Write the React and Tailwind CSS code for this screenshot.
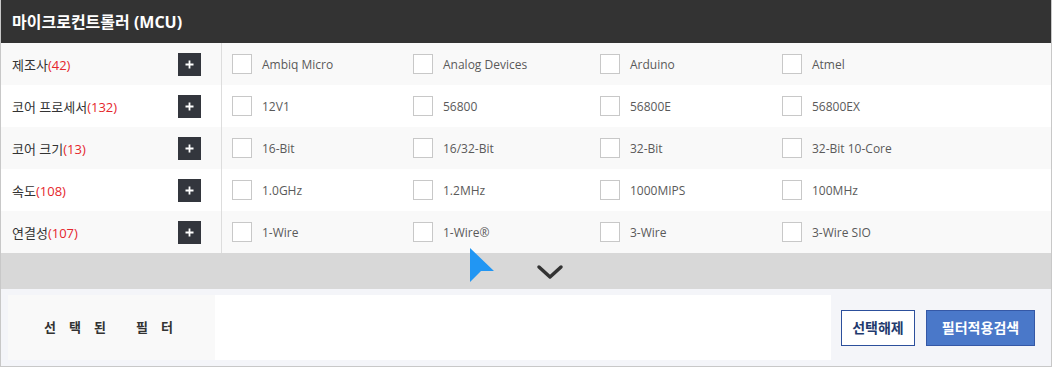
const rows = [
  { name: "제조사", count: 42, bg: "bg-[#f9f9f9]", items: ["Ambiq Micro", "Analog Devices", "Arduino", "Atmel"] },
  { name: "코어 프로세서", count: 132, bg: "bg-white", items: ["12V1", "56800", "56800E", "56800EX"] },
  { name: "코어 크기", count: 13, bg: "bg-[#f9f9f9]", items: ["16-Bit", "16/32-Bit", "32-Bit", "32-Bit 10-Core"] },
  { name: "속도", count: 108, bg: "bg-white", items: ["1.0GHz", "1.2MHz", "1000MIPS", "100MHz"] },
  { name: "연결성", count: 107, bg: "bg-[#f9f9f9]", items: ["1-Wire", "1-Wire®", "3-Wire", "3-Wire SIO"] },
]

const colWidths = ["w-[181px]", "w-[187px]", "w-[182px]", "flex-1"]

function FilterRow({ row }) {
  return (
    <div className={`flex h-[42px] ${row.bg}`}>
      <div className="flex w-[221px] items-center justify-between border-r border-[#dddddd] pl-[11px] pr-[20px]">
        <span className="pt-[3px] text-[13px] text-[#333]">
          {row.name}
          <span className="text-[#e5262c]">({row.count})</span>
        </span>
        <button className="flex h-[23px] w-[23px] items-center justify-center bg-[#33363d]">
          <svg width="9" height="9" viewBox="0 0 9 9">
            <path d="M4.5 0.5 V8.5 M0.5 4.5 H8.5" stroke="#fff" strokeWidth="1.8" />
          </svg>
        </button>
      </div>
      <div className="flex flex-1 items-center pl-[10px]">
        {row.items.map((item, i) => (
          <label key={item} className={`flex items-center ${colWidths[i]}`}>
            <span className="h-[20px] w-[20px] shrink-0 border border-[#c8c8c8] bg-white"></span>
            <span className="ml-[10px] pt-[2px] text-[12px] text-[#5a5a5a]">{item}</span>
          </label>
        ))}
      </div>
    </div>
  )
}

export default function App() {
  return (
    <div className="relative w-[1052px] h-[367px] border-x border-b border-[#c8c8c8] bg-white font-['Open_Sans','Noto_Sans_CJK_KR',sans-serif]">
      <div className="flex h-[43px] items-center bg-[#333333] pl-[11px] text-[16px] font-bold text-white">
        마이크로컨트롤러 (MCU)
      </div>
      {rows.map((row) => (
        <FilterRow key={row.name} row={row} />
      ))}
      <div className="flex h-[36px] items-center justify-center bg-[#d8d8d8] pl-[48px]">
        <svg width="28" height="16" viewBox="0 0 28 16" className="mt-[1px]">
          <path d="M3 3 L14 13 L25 3" fill="none" stroke="#333" strokeWidth="3.5" strokeLinecap="round" strokeLinejoin="round" />
        </svg>
      </div>
      <div className="flex h-[77px] items-center bg-[#f4f5f9] pl-[7px] pr-[16px]">
        <div className="flex h-[65px] w-[207px] items-center gap-[13px] bg-[#f9f9f9] pl-[36px] text-[13px] font-semibold text-[#333]">
          <span>선</span>
          <span>택</span>
          <span>된</span>
          <span className="ml-[17px]">필</span>
          <span>터</span>
        </div>
        <div className="h-[65px] w-[616px] bg-white"></div>
        <button className="ml-[10px] h-[36px] w-[74px] border border-[#2c4f9c] bg-white text-[14px] font-bold text-[#1f3a6e]">
          선택해제
        </button>
        <button className="ml-[11px] h-[36px] w-[109px] border border-[#3558a6] bg-[#4a78c9] text-[14px] font-bold text-white">
          필터적용검색
        </button>
      </div>
      <svg className="absolute left-[468px] top-[247px]" width="26" height="36" viewBox="0 0 26 36">
        <path d="M1 1 L1 35 L12 24 L25 24 Z" fill="#2196f3" />
      </svg>
    </div>
  )
}
